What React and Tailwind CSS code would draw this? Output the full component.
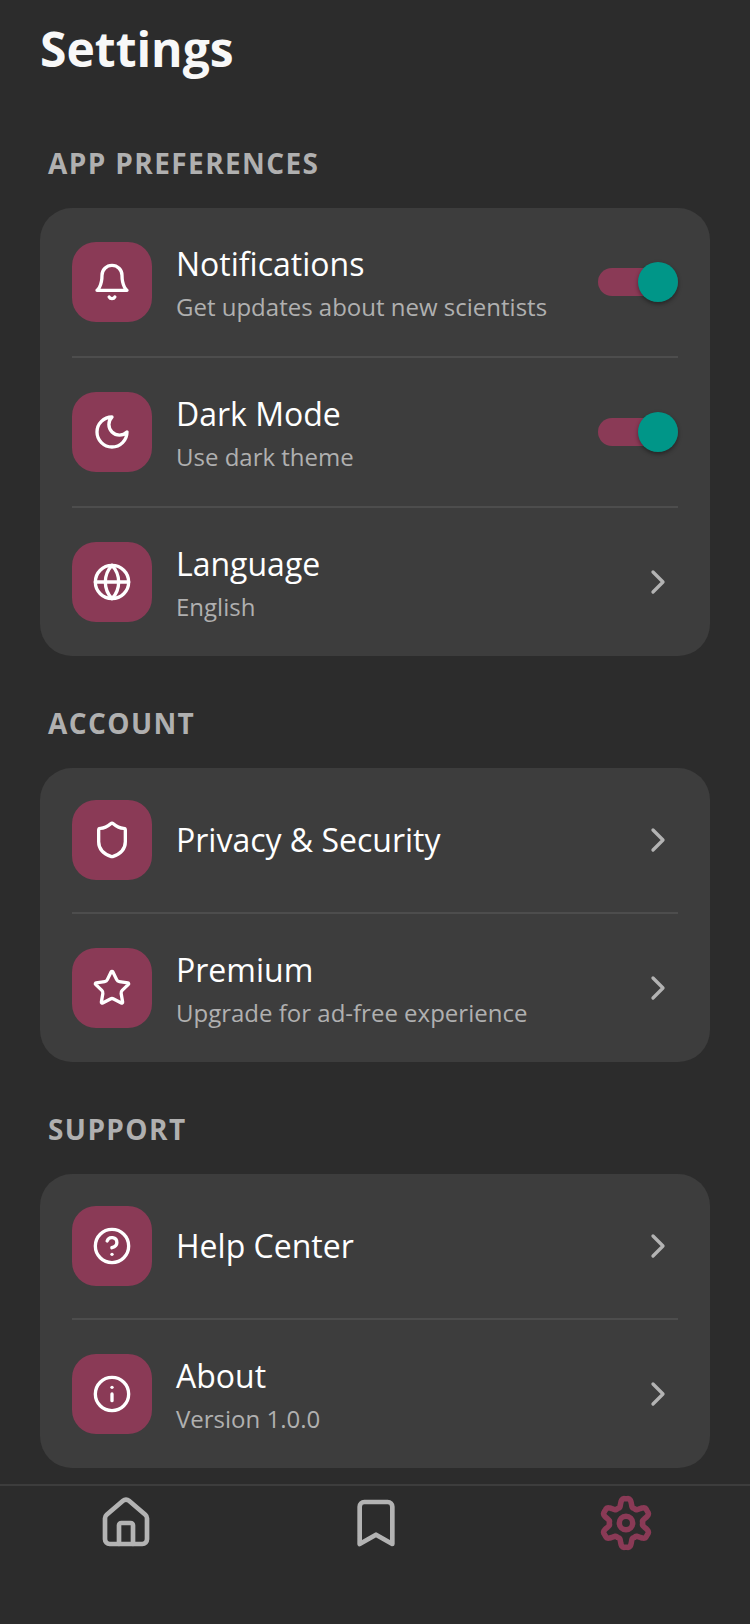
import React from "react";
import { Globe, Shield, Star, CircleHelp, Info, ChevronRight, House } from "lucide-react";

const svgProps = (size, color) => ({
  width: size,
  height: size,
  viewBox: "0 0 24 24",
  fill: "none",
  stroke: color,
  strokeWidth: 2,
  strokeLinecap: "round",
  strokeLinejoin: "round",
});

function Bell({ size, color }) {
  return (
    <svg {...svgProps(size, color)}>
      <path d="M6 8a6 6 0 0 1 12 0c0 7 3 9 3 9H3s3-2 3-9" />
      <path d="M10.3 21a1.94 1.94 0 0 0 3.4 0" />
    </svg>
  );
}

function Moon({ size, color }) {
  return (
    <svg {...svgProps(size, color)}>
      <path d="M12 3a6 6 0 0 0 9 9 9 9 0 1 1-9-9Z" />
    </svg>
  );
}

function Bookmark({ size, color }) {
  return (
    <svg {...svgProps(size, color)}>
      <path d="m19 21-7-4-7 4V5a2 2 0 0 1 2-2h10a2 2 0 0 1 2 2v16z" />
    </svg>
  );
}

function gearPath() {
  const pts = [];
  for (let i = 0; i < 144; i++) {
    const t = (i / 144) * Math.PI * 2;
    const r = 20.5 + 4.6 * Math.cos(6 * t) - 0.8 * Math.cos(18 * t);
    pts.push(`${(r * Math.sin(t)).toFixed(2)} ${(-r * Math.cos(t)).toFixed(2)}`);
  }
  return `M${pts.join("L")}Z`;
}

function Gear({ size, color }) {
  return (
    <svg width={size} height={size} viewBox="-28 -28 56 56" fill="none" stroke={color} strokeWidth={5.5} strokeLinejoin="round">
      <path d={gearPath()} />
      <circle cx="0" cy="0" r="6.7" />
    </svg>
  );
}

function IconBox({ icon: Icon }) {
  return (
    <div className="flex h-20 w-20 shrink-0 items-center justify-center rounded-3xl bg-[#8a3a56]">
      <Icon size={40} color="#ffffff" strokeWidth={2} />
    </div>
  );
}

function Toggle() {
  return (
    <div className="relative h-7 w-20 shrink-0 rounded-full bg-[#8a3a56]">
      <div className="absolute right-0 top-[-6px] h-10 w-10 rounded-full bg-[#009688] shadow-[0_2px_4px_rgba(0,0,0,0.4)]" />
    </div>
  );
}

function Row({ icon, title, sub, toggle, divider }) {
  return (
    <div className={divider ? "flex items-center border-b-2 border-[#4d4d4d] py-8" : "flex items-center py-8"}>
      <IconBox icon={icon} />
      <div className={sub ? "ml-6 h-[84px] min-w-0 flex-1 pt-[2px]" : "ml-6 flex h-20 min-w-0 flex-1 flex-col justify-center"}>
        <div className="text-[32px] leading-[44px] text-white">{title}</div>
        {sub && <div className="mt-1 text-[24px] leading-[34px] text-[#b0b0b0]">{sub}</div>}
      </div>
      {toggle ? <Toggle /> : <ChevronRight size={40} color="#b3b3b3" strokeWidth={2} />}
    </div>
  );
}

function Section({ title, children }) {
  return (
    <section className="mt-[49px] first:mt-0">
      <h2 className="mb-[27px] ml-2 text-[28px] font-bold leading-9 tracking-[1.4px] text-[#b0b0b0]">{title}</h2>
      <div className="rounded-[32px] bg-[#3d3d3d] px-8">{children}</div>
    </section>
  );
}

export default function App() {
  return (
    <div className="flex h-[1624px] w-[750px] flex-col overflow-hidden bg-[#2c2c2c] font-['Open_Sans',sans-serif]">
      <main className="flex-1 overflow-hidden px-10">
        <h1 className="mt-4 text-[48px] font-bold leading-[65px] text-[#f8f8f8]">Settings</h1>
        <div className="mt-16">
          <Section title="APP PREFERENCES">
            <Row icon={Bell} title="Notifications" sub="Get updates about new scientists" toggle divider />
            <Row icon={Moon} title="Dark Mode" sub="Use dark theme" toggle divider />
            <Row icon={Globe} title="Language" sub="English" />
          </Section>
          <Section title="ACCOUNT">
            <Row icon={Shield} title="Privacy & Security" divider />
            <Row icon={Star} title="Premium" sub="Upgrade for ad-free experience" />
          </Section>
          <Section title="SUPPORT">
            <Row icon={CircleHelp} title="Help Center" divider />
            <Row icon={Info} title="About" sub="Version 1.0.0" />
          </Section>
        </div>
      </main>
      <nav className="grid h-[140px] grid-cols-3 border-t-2 border-[#3d3d3d] pt-[9px]">
        <div className="flex justify-center pl-[2px]"><House size={56} color="#b3b3b3" strokeWidth={2} /></div>
        <div className="flex justify-center pl-[2px]"><Bookmark size={56} color="#b3b3b3" /></div>
        <div className="flex justify-center pl-[2px]"><Gear size={56} color="#8a3a56" /></div>
      </nav>
    </div>
  );
}
